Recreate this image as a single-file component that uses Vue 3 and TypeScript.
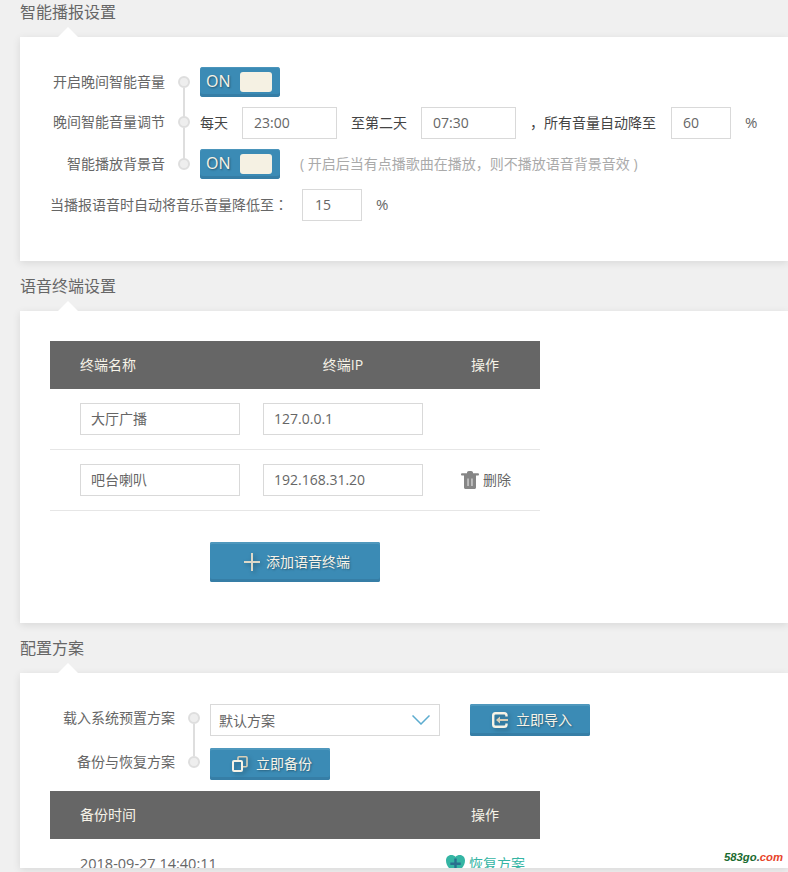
<script setup lang="ts">
const terminals = [
  { name: '大厅广播', ip: '127.0.0.1', removable: false },
  { name: '吧台喇叭', ip: '192.168.31.20', removable: true },
]
</script>

<template>
  <div class="page">
    <section class="section">
      <h2 class="title">智能播报设置</h2>
      <div class="card">
        <div class="rows">
          <div class="row">
            <span class="label">开启晚间智能音量</span>
            <span class="dot line"></span>
            <div class="toggle"><span>ON</span><i class="knob"></i></div>
          </div>
          <div class="row">
            <span class="label">晚间智能音量调节</span>
            <span class="dot line"></span>
            <div class="controls">
              <span class="dark">每天</span>
              <input class="input w95" value="23:00" />
              <span class="dark">至第二天</span>
              <input class="input w95" value="07:30" />
              <span class="dark wide">，所有音量自动降至</span>
              <input class="input w60" value="60" />
              <span class="pct">%</span>
            </div>
          </div>
          <div class="row">
            <span class="label">智能播放背景音</span>
            <span class="dot"></span>
            <div class="toggle"><span>ON</span><i class="knob"></i></div>
            <span class="hint">( 开启后当有点播歌曲在播放，则不播放语音背景音效 )</span>
          </div>
          <div class="row duck">
            <span class="duck-text">当播报语音时自动将音乐音量降低至<span class="colon">：</span></span>
            <input class="input w60 pad12" value="15" />
            <span class="pct">%</span>
          </div>
        </div>
      </div>
    </section>

    <section class="section">
      <h2 class="title">语音终端设置</h2>
      <div class="card card-terminal">
        <div class="table">
          <div class="thead tgrid">
            <span class="c1">终端名称</span>
            <span class="center">终端IP</span>
            <span class="c3">操作</span>
          </div>
          <div v-for="t in terminals" :key="t.ip" class="trow tgrid">
            <div class="c1"><input class="input w160" :value="t.name" /></div>
            <input class="input w160" :value="t.ip" />
            <div v-if="t.removable" class="del">
              <svg width="18" height="18" viewBox="0 0 18 18">
                <path fill="#868686" d="M6 1.800C6 .8 6.800 0 7.800 0h2.400C11.200 0 12 .8 12 1.800V2.300h4.800c.7 0 1.200.5 1.200 1.100S17.500 4.600 16.800 4.600H1.200C.5 4.600 0 4 0 3.400S.5 2.300 1.200 2.300H6z" />
                <path fill="#868686" d="M3 4h12v12.500c0 .8-.7 1.500-1.500 1.500h-9C3.700 18 3 17.300 3 16.500z" />
                <path fill="#c4c4c4" d="M6.200 7.500h1.700v7.500H6.200zM10.100 7.500h1.700v7.500h-1.700z" />
              </svg>
              <span>删除</span>
            </div>
          </div>
        </div>
        <div class="add-wrap">
          <button class="btn btn-add">
            <svg class="ico" width="16" height="18" viewBox="0 0 16 18">
              <path fill="#dcd8c8" d="M7 0h2v8h7v2H9v8H7v-8H0V8h7z" />
            </svg>
            <span>添加语音终端</span>
          </button>
        </div>
      </div>
    </section>

    <section class="section">
      <h2 class="title">配置方案</h2>
      <div class="card card-plan">
        <div class="rows plan-rows">
          <div class="row">
            <span class="label">载入系统预置方案</span>
            <span class="dot line"></span>
            <div class="select">
              <span>默认方案</span>
              <svg width="18" height="10" viewBox="0 0 18 10">
                <path fill="none" stroke="#5caccf" stroke-width="1.500" d="M.5.5 9 9 17.500.5" />
              </svg>
            </div>
            <button class="btn btn-plan import">
              <svg class="ico" width="16" height="16" viewBox="0 0 16 16">
                <path fill="none" stroke="#f7f3e6" stroke-width="2.400" d="M14.500 4.500V3.500c0-1.300-1-2.300-2.300-2.300H3.500C2.200 1.200 1.200 2.200 1.200 3.500v9c0 1.300 1 2.300 2.300 2.300h8.700c1.300 0 2.300-1 2.300-2.300v-1" />
                <path fill="#d8cfb8" d="M8 4.500V7h8v2H8v2.500L4 8z" />
              </svg>
              <span>立即导入</span>
            </button>
          </div>
          <div class="row">
            <span class="label">备份与恢复方案</span>
            <span class="dot"></span>
            <button class="btn btn-plan">
              <svg class="ico" width="16" height="16" viewBox="0 0 16 16">
                <path fill="none" stroke="#d8cfb8" stroke-width="1.600" d="M6 4V1.800c0-.6.400-1 1-1h7c.6 0 1 .4 1 1v8c0 .6-.4 1-1 1h-3" />
                <rect x="1" y="5" width="9" height="10" rx="1" fill="none" stroke="#f7f3e6" stroke-width="2" />
              </svg>
              <span>立即备份</span>
            </button>
          </div>
        </div>
        <div class="table backup">
          <div class="thead bgrid">
            <span class="c1">备份时间</span>
            <span class="bop">操作</span>
          </div>
          <div class="brow bgrid">
            <span class="c1 stamp">2018-09-27 14:40:11</span>
            <div class="restore">
              <svg width="19" height="18" viewBox="0 0 19 18">
                <path fill="#35b5a4" d="M9.500 18C4 15 0 11 0 5.500 0 2.300 2.300 0 5 0c1.900 0 3.500.6 4.500 1.800C10.500.6 12.100 0 14 0c2.700 0 5 2.300 5 5.500C19 11 15 15 9.500 18z" />
                <path fill="#2a6f8f" d="M8.300 3.500h2.400v4h4v2.400h-4v4.500H8.300V9.900h-4V7.500h4z" />
              </svg>
              <span>恢复方案</span>
            </div>
          </div>
        </div>
      </div>
    </section>

    <div class="mark"><span class="g">583go</span><span class="d">.</span><span class="r">com</span></div>
  </div>
</template>

<style scoped>
.page {
  position: relative;
  width: 788px;
  height: 885px;
  margin-top: -13px;
  overflow: hidden;
  background: #f0f0f0;
  font-family: "Open Sans", "Noto Sans CJK SC", sans-serif;
  font-size: 14px;
  color: #666;
}
.title {
  margin: 0;
  height: 50px;
  line-height: 50px;
  padding-left: 20px;
  font-size: 16px;
  font-weight: 400;
  color: #666;
}
.card {
  position: relative;
  margin-left: 20px;
  padding: 30px 0 40px;
  background: #fff;
  box-shadow: 0 2px 8px rgba(0, 0, 0, 0.1);
}
.card::before {
  content: "";
  position: absolute;
  left: 38px;
  top: -10px;
  border: 10px solid transparent;
  border-top: 0;
  border-bottom-color: #fff;
}
.rows {
  display: flex;
  flex-direction: column;
  gap: 10px;
}
.row {
  display: flex;
  align-items: flex-start;
  --row-line: 30px;
  --label-w: 145px;
}
.label {
  width: var(--label-w);
  line-height: var(--row-line);
  text-align: right;
  flex: none;
}
.dot {
  position: relative;
  flex: none;
  box-sizing: border-box;
  width: 12px;
  height: 12px;
  margin: calc((var(--row-line) - 12px) / 2) 10px 0 13px;
  border: 2px solid #dedede;
  border-radius: 50%;
  background: #eee;
}
.dot.line::after {
  content: "";
  position: absolute;
  left: 3px;
  top: 10px;
  width: 2px;
  height: 32px;
  background: #dedede;
}
.toggle {
  display: flex;
  align-items: center;
  justify-content: space-between;
  box-sizing: border-box;
  width: 80px;
  height: 30px;
  padding: 0 8px 0 6px;
  border-radius: 3px;
  background: #3b8bb5;
  box-shadow: inset 0 -3px 0 #367ea6, inset 0 1px 0 #4b95bb;
  color: #f7f3e6;
  font-size: 16px;
  text-shadow: 1px 1px 2px rgba(0, 0, 0, 0.4);
}
.toggle span {
  padding-bottom: 3px;
}
.knob {
  width: 32px;
  height: 20px;
  margin-bottom: 0;
  border-radius: 3px;
  background: #f5f1e3;
}
.controls {
  display: flex;
  align-items: center;
  gap: 14px;
  height: 32px;
}
.controls > span,
.duck > span {
  padding-bottom: 2px;
}
.dark {
  color: #444;
}
.wide {
  margin-right: 1px;
}
.pct {
  font-size: 15px;
}
.input {
  box-sizing: border-box;
  height: 32px;
  padding: 0 10px 2px;
  border: 1px solid #d9d9d9;
  outline: none;
  background: #fff;
  font: inherit;
  color: #666;
}
.w95 {
  width: 95px;
  padding-left: 11px;
}
.w60 {
  width: 60px;
  padding-left: 11px;
}
.pad12 {
  padding-left: 12px;
}
.w160 {
  width: 160px;
}
.hint {
  margin-left: 20px;
  line-height: 30px;
  color: #aaa;
}
.duck {
  align-items: center;
  gap: 14px;
  padding-left: 30px;
}
.colon {
  font-family: "Noto Sans CJK TC", sans-serif;
}
.card-terminal {
  padding: 30px 0 41px;
}
.table {
  width: 490px;
  margin-left: 30px;
}
.thead {
  height: 48px;
  line-height: 48px;
  background: #666;
  color: #f6f3e8;
}
.tgrid {
  display: grid;
  grid-template-columns: 213px 160px 117px;
  align-items: center;
}
.c1 {
  padding-left: 30px;
}
.center {
  text-align: center;
}
.c3 {
  padding-left: 48px;
}
.trow {
  box-sizing: border-box;
  height: 61px;
  border-bottom: 1px solid #e6e6e6;
}
.del {
  display: flex;
  align-items: center;
  gap: 4px;
  padding-left: 38px;
}
.del span {
  padding-bottom: 2px;
}
.add-wrap {
  display: flex;
  justify-content: center;
  width: 490px;
  margin: 31px 0 0 30px;
}
.btn {
  display: flex;
  align-items: center;
  justify-content: center;
  box-sizing: border-box;
  padding: 0 0 0 4px;
  border: 0;
  border-radius: 2px;
  background: #3b8bb5;
  box-shadow: inset 0 2px 0 #4f98bd, inset 0 -3px 0 #367ea6;
  color: #f6f3e8;
  font: inherit;
  text-shadow: 1px 1px 2px rgba(0, 0, 0, 0.35);
}
.btn span {
  padding-bottom: 2px;
}
.ico {
  flex: none;
  filter: drop-shadow(2px 2px 2px rgba(0, 0, 0, 0.25));
}
.btn-add {
  gap: 6px;
  width: 170px;
  height: 40px;
}
.btn-plan {
  gap: 8px;
  width: 120px;
  height: 32px;
}
.import {
  margin-left: 30px;
}
.card-plan {
  height: 195px;
  box-sizing: border-box;
  padding: 31px 0 0;
}
.plan-rows {
  gap: 12px;
}
.plan-rows .row {
  --row-line: 28px;
  --label-w: 155px;
}
.select {
  display: flex;
  align-items: center;
  justify-content: space-between;
  box-sizing: border-box;
  width: 230px;
  height: 32px;
  padding: 0 9px 0 8px;
  border: 1px solid #d9d9d9;
}
.backup {
  margin-top: 11px;
}
.bgrid {
  display: grid;
  grid-template-columns: 396px 94px;
}
.bop {
  padding-left: 25px;
}
.brow {
  height: 29px;
  line-height: 50px;
  overflow: hidden;
}
.stamp {
  font-size: 14.500px;
}
.restore {
  display: flex;
  align-items: center;
  gap: 4px;
  height: 50px;
  color: #35b5a4;
}
.mark {
  position: absolute;
  right: 5px;
  top: 862px;
  font: italic 700 11.300px "Liberation Sans", sans-serif;
  line-height: 16px;
}
.g {
  color: #1a6b2f;
}
.d {
  color: #555;
}
.r {
  color: #e8442a;
}
</style>
